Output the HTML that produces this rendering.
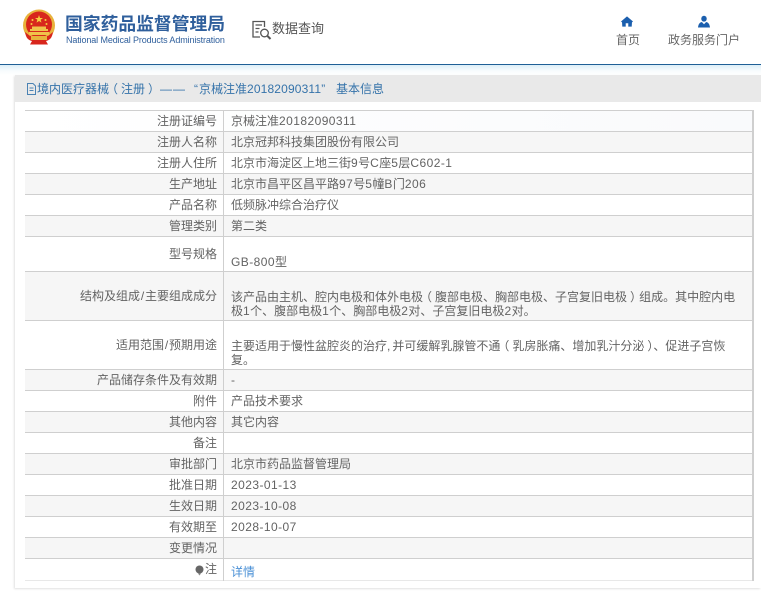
<!DOCTYPE html>
<html lang="zh">
<head>
<meta charset="utf-8">
<style>
html,body{margin:0;padding:0;background:#fff}
body{width:761px;height:593px;position:relative;overflow:hidden;font-family:"Liberation Sans","Noto Sans CJK SC",sans-serif;color:#555}
.a{position:absolute;white-space:nowrap}
.r{position:absolute;left:25px;width:727px;border-top:1px solid #cfcfcf;box-sizing:border-box}
.l{position:absolute;left:0;width:192px;text-align:right;font-size:12px;line-height:20px;color:#636363}
.v{position:absolute;left:206px;width:510px;font-size:12px;line-height:14px;color:#636363}
.v.s{line-height:20px;white-space:nowrap}
.g{background:#f6f6f6}
.n{letter-spacing:.44px}
.o{position:relative;left:-3px}
.c{position:relative;left:3px}
.sl{padding:0 .8px}
</style>
</head>
<body>
<svg class="a" style="left:22px;top:9px" width="34" height="36" viewBox="0 0 34 36">
<circle cx="17" cy="16.500" r="16" fill="#e8b23c"/>
<circle cx="17" cy="15.500" r="13" fill="#d8261c"/>
<polygon points="17,6 18,9 21,9 18.600,10.800 19.500,13.600 17,12 14.500,13.600 15.400,10.800 13,9 16,9" fill="#f5d040"/>
<circle cx="10.500" cy="11" r="1" fill="#f5d040"/><circle cx="23.500" cy="11" r="1" fill="#f5d040"/><circle cx="9.500" cy="15" r="1" fill="#f5d040"/><circle cx="24.500" cy="15" r="1" fill="#f5d040"/>
<path d="M8 20h18v2H8zM10 17.500h14v2.500H10zM7 23h20v3H7z" fill="#f0c24a"/>
<path d="M3 23c1 6 3 8 7 9l-2 3.500h18l-2-3.500c4-1 6-3 7-9l-5 4H8z" fill="#d8261c"/>
<path d="M9 27h16v4H9z" fill="#e8b23c"/>
</svg>
<div class="a" style="left:65px;top:12px;font-size:17.800px;line-height:24px;font-weight:bold;color:#2f5f9c">国家药品监督管理局</div>
<div class="a" style="left:66px;top:34px;font-size:9px;line-height:12px;color:#2f5f9c;letter-spacing:-.12px">National Medical Products Administration</div>

<svg class="a" style="left:252px;top:20px" width="21" height="20" viewBox="0 0 21 20" fill="none" stroke="#555" stroke-width="1.300">
<path d="M8 17H1V1.500H12.500V7"/><path d="M3.500 5h6.500M3.500 8.500h4M3.500 12h3"/><circle cx="12.500" cy="13" r="3.800"/><path d="M15.500 16l3 3" stroke-width="2"/>
</svg>
<div class="a" style="left:272px;top:19px;font-size:13px;line-height:20px;color:#555">数据查询</div>

<svg class="a" style="left:621px;top:16px" width="12" height="11" viewBox="0 0 14 13" preserveAspectRatio="none"><path d="M7 .5L0 6.500 1.200 7.500 1.500 12.500H5.500V8.500H8.500V12.500H12.500L12.800 7.500 14 6.500z" fill="#1b5fae"/></svg>
<div class="a" style="left:616px;top:31px;font-size:12px;line-height:18px;color:#666">首页</div>
<svg class="a" style="left:698px;top:15px" width="12" height="13" viewBox="0 0 14 14" preserveAspectRatio="none"><circle cx="7" cy="4" r="3.200" fill="#1b5fae"/><path d="M0 13.500C.5 9.500 2 8 4.500 7.500L7 10l2.500-2.500C12 8 13.500 9.500 14 13.500z" fill="#1b5fae"/></svg>
<div class="a" style="left:668px;top:31px;font-size:12px;line-height:18px;color:#666">政务服务门户</div>

<div class="a" style="left:0;top:64px;width:761px;height:1px;background:#1f5f96"></div>
<div class="a" style="left:0;top:65px;width:761px;height:10px;background:linear-gradient(#dceef7,#f8fcfd 60%,#fff)"></div>

<div class="a" style="left:15px;top:75px;width:746px;height:513px;background:#fff;box-shadow:-1px 1px 2px rgba(0,0,0,.12)"></div>
<div class="a" style="left:15px;top:75px;width:746px;height:27px;background:#e9e9e9"></div>
<svg class="a" style="left:26px;top:83px" width="11" height="12" viewBox="0 0 11 12" fill="none" stroke="#4a82b3"><path d="M1.500.5H7L9.500 3V11.500H1.500z"/><path d="M3.500 5h4M3.500 7.500h4"/></svg>
<div class="a" style="left:37px;top:80px;font-size:12px;line-height:18px;color:#3573aa">境内医疗器械<span class="o">（</span>注册<span class="c">）</span></div>
<div class="a" style="left:160px;top:80px;font-size:12px;line-height:18px;color:#3573aa;width:26px;letter-spacing:1px">——</div>
<div class="a" style="left:194px;top:80px;font-size:12px;line-height:18px;color:#3573aa">“</div>
<div class="a" style="left:199px;top:80px;font-size:12px;line-height:18px;color:#3573aa">京械注准<span style="letter-spacing:.15px">20182090311</span>”</div>
<div class="a" style="left:336px;top:80px;font-size:12px;line-height:18px;color:#3573aa">基本信息</div>

<div class="a" style="left:25px;top:110px;width:727px;height:471px;background:#fff"></div>
<div class="r" style="top:110px;height:21px;background:linear-gradient(90deg,#fff,#f9fafc)"><div class="l">注册证编号</div><div class="v s">京械注准<span class="n">20182090311</span></div></div>
<div class="r g" style="top:131px;height:21px"><div class="l">注册人名称</div><div class="v s">北京冠邦科技集团股份有限公司</div></div>
<div class="r" style="top:152px;height:21px"><div class="l">注册人住所</div><div class="v s">北京市海淀区上地三街<span class="n">9</span>号<span class="n">C</span>座<span class="n">5</span>层<span class="n">C602-1</span></div></div>
<div class="r g" style="top:173px;height:21px"><div class="l">生产地址</div><div class="v s">北京市昌平区昌平路<span class="n">97</span>号<span class="n">5</span>幢<span class="n">B</span>门<span class="n">206</span></div></div>
<div class="r" style="top:194px;height:21px"><div class="l">产品名称</div><div class="v s">低频脉冲综合治疗仪</div></div>
<div class="r g" style="top:215px;height:21px"><div class="l">管理类别</div><div class="v s">第二类</div></div>
<div class="r" style="top:236px;height:35px"><div class="l" style="top:7px">型号规格</div><div class="v s" style="top:15px"><span class="n">GB-800</span>型</div></div>
<div class="r g" style="top:271px;height:49px"><div class="l" style="top:14px">结构及组成<span class="sl">/</span>主要组成成分</div><div class="v" style="top:18px">该产品由主机、腔内电极和体外电极<span class="o">（</span>腹部电极、胸部电极、子宫复旧电极<span class="c">）</span>组成。其中腔内电极<span class="n">1</span>个、腹部电极<span class="n">1</span>个、胸部电极<span class="n">2</span>对、子宫复旧电极<span class="n">2</span>对。</div></div>
<div class="r" style="top:320px;height:49px"><div class="l" style="top:14px">适用范围<span class="sl">/</span>预期用途</div><div class="v" style="top:18px">主要适用于慢性盆腔炎的治疗<span style="padding-right:2px">,</span>并可缓解乳腺管不通<span class="o">（</span>乳房胀痛、增加乳汁分泌<span class="c" style="padding-right:3px">）</span>、促进子宫恢复。</div></div>
<div class="r g" style="top:369px;height:21px"><div class="l">产品储存条件及有效期</div><div class="v s">-</div></div>
<div class="r" style="top:390px;height:21px"><div class="l">附件</div><div class="v s">产品技术要求</div></div>
<div class="r g" style="top:411px;height:21px"><div class="l">其他内容</div><div class="v s">其它内容</div></div>
<div class="r" style="top:432px;height:21px"><div class="l">备注</div></div>
<div class="r g" style="top:453px;height:21px"><div class="l">审批部门</div><div class="v s">北京市药品监督管理局</div></div>
<div class="r" style="top:474px;height:21px"><div class="l">批准日期</div><div class="v s n">2023-01-13</div></div>
<div class="r g" style="top:495px;height:21px"><div class="l">生效日期</div><div class="v s n">2023-10-08</div></div>
<div class="r" style="top:516px;height:21px"><div class="l">有效期至</div><div class="v s n">2028-10-07</div></div>
<div class="r g" style="top:537px;height:21px"><div class="l">变更情况</div></div>
<div class="r" style="top:558px;height:23px;border-bottom:1px solid #e8e8e8"><div class="l">注</div><div class="v s" style="top:3px;color:#4a90d6">详情</div>
<svg class="a" style="left:170px;top:6px" width="9" height="11" viewBox="0 0 9 11"><circle cx="4.500" cy="4.500" r="4" fill="#666"/><path d="M3 8.500h3L4.500 10.500z" fill="#888"/></svg></div>

<div class="a" style="left:223px;top:110px;width:1px;height:471px;background:#cfcfcf"></div>
<div class="a" style="left:752px;top:110px;width:2px;height:471px;background:#cfcfcf"></div>
</body>
</html>
